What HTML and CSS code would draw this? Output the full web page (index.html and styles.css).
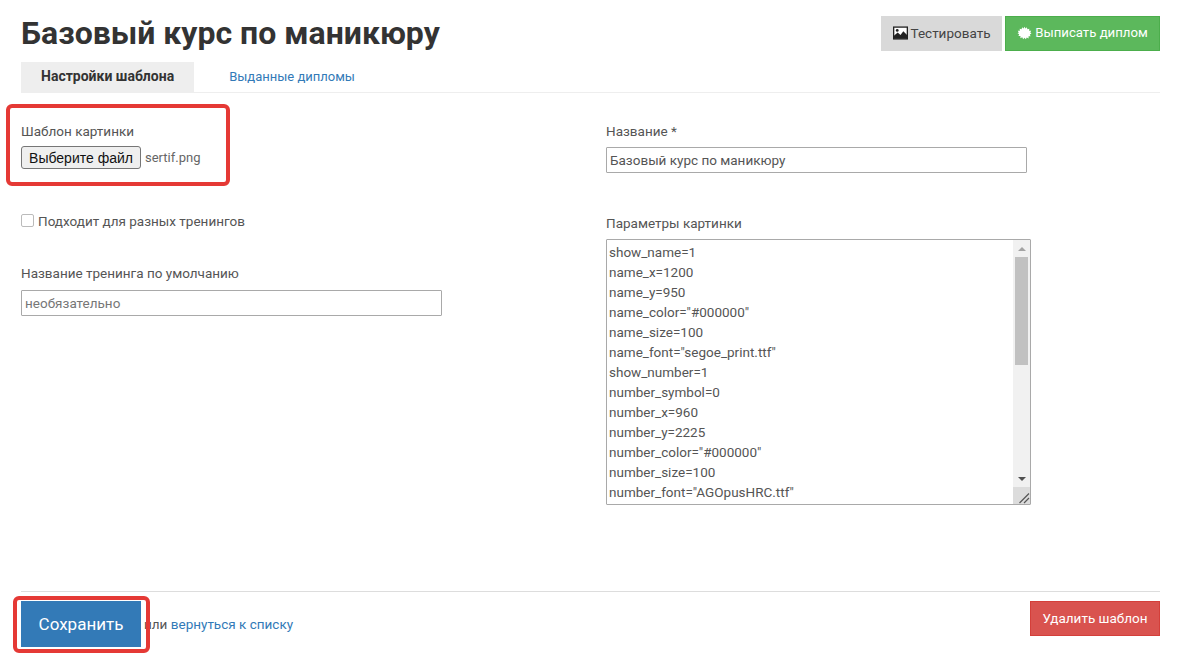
FILE: index.html
```html
<!DOCTYPE html>
<html lang="ru">
<head>
<meta charset="utf-8">
<title>Базовый курс по маникюру</title>
<link rel="stylesheet" href="styles.css">
</head>
<body>
<div class="page">
  <header class="head">
    <h1>Базовый курс по маникюру</h1>
    <div class="actions">
      <a class="btn btn-gray"><svg class="ico" viewBox="0 0 16 14"><rect x="0.7" y="0.7" width="14.6" height="12.6" fill="#fff" stroke="#222" stroke-width="1.4"/><path d="M1 13V10L5 6.500L8 9L11 5L15 9V13Z" fill="#222"/><circle cx="4.500" cy="4.200" r="1.500" fill="#222"/></svg>Тестировать</a>
      <a class="btn btn-green"><svg class="ico" viewBox="-1 -1 18 18"><path fill="#fff" d="M8 0l1.300 2.200L11.100.7l.6 2.600 2.500-.9-.3 2.700 2.700-.1-1.200 2.400L17 8.500l-2.200 1.300 1 2.400-2.600.1.100 2.700-2.400-1.100L9.700 16 8 14l-1.700 2-1.200-2.500-2.400 1.100.1-2.700-2.600-.1 1-2.400L-1 8.500l1.600-1.100-1.200-2.400 2.700.1-.3-2.700 2.500.9.600-2.600 1.800 1.500z"/></svg>Выписать диплом</a>
    </div>
  </header>
  <nav class="tabs">
    <a class="tab active">Настройки шаблона</a>
    <a class="tab">Выданные дипломы</a>
  </nav>
  <main class="cols">
    <section class="col col-left">
      <div class="field f-file">
        <label>Шаблон картинки</label>
        <div class="file"><button class="file-btn" type="button">Выберите файл</button><span class="file-name">sertif.png</span></div>
        <span class="mark mark-file"></span>
      </div>
      <div class="check"><span class="box"></span>Подходит для разных тренингов</div>
      <div class="field f-default">
        <label>Название тренинга по умолчанию</label>
        <input class="input" type="text" placeholder="необязательно">
      </div>
    </section>
    <section class="col col-right">
      <div class="field f-name">
        <label>Название *</label>
        <input class="input" type="text" value="Базовый курс по маникюру">
      </div>
      <div class="field f-params">
        <label>Параметры картинки</label>
        <div class="area-wrap">
        <textarea class="area" spellcheck="false">show_name=1
name_x=1200
name_y=950
name_color="#000000"
name_size=100
name_font="segoe_print.ttf"
show_number=1
number_symbol=0
number_x=960
number_y=2225
number_color="#000000"
number_size=100
number_font="AGOpusHRC.ttf"
show_date=1
date_x=1700
date_y=2225
date_color="#000000"
date_size=100
date_font="AGOpusHRC.ttf"</textarea>
        <div class="sbar">
          <span class="arrow arrow-up"></span>
          <div class="track"><div class="thumb"></div></div>
          <span class="arrow arrow-down"></span>
          <div class="corner"><svg class="grip" viewBox="0 0 12 12"><path d="M1.500 11L11 1.500M6 11L11 6" stroke="#555" stroke-width="1.200" fill="none"/></svg></div>
        </div>
        </div>
      </div>
    </section>
  </main>
  <footer class="foot">
    <div class="foot-left">
      <a class="btn-save">Сохранить</a>
      <span class="or">или <a class="link">вернуться к списку</a></span>
      <span class="mark mark-save"></span>
    </div>
    <a class="btn btn-red">Удалить шаблон</a>
  </footer>
</div>
</body>
</html>
```
FILE: styles.css
```css
html, body { margin: 0; padding: 0; background: #fff; }
body {
  font-family: Roboto, "Open Sans", sans-serif;
  font-size: 13.500px;
  color: #555;
  height: 671px;
  overflow: hidden;
}
.page { width: 1139px; margin-left: 21px; }
.head { display: flex; justify-content: space-between; align-items: flex-start; height: 62px; }
h1 { margin: 11px 0 0; font-size: 32px; line-height: 44px; font-weight: 700; color: #333; }
.actions { display: flex; gap: 3px; margin-top: 16px; }
.btn { display: flex; align-items: center; justify-content: center; height: 35px; padding-bottom: 2px; box-sizing: border-box; font-size: 13.500px; }
.btn-gray { width: 121px; background: #d9d9d9; color: #444; }
.btn-green { width: 155px; background: #5cb85c; color: #fff; border: 1px solid #4cae4c; font-size: 13.200px; }
.ico { width: 15px; height: 14px; margin-right: 3px; }
.tabs { display: flex; height: 30px; border-bottom: 1px solid #eee; }
.tab { display: block; padding: 0 20px; line-height: 29px; color: #337ab7; font-size: 13px; margin-right: 15px; }
.tab.active { background: #eee; color: #333; font-size: 14px; font-weight: 700; white-space: nowrap; }
.cols { display: flex; height: 498px; }
.col-left { width: 585px; }
.col-right { flex: 1; }
.field { position: relative; }
label { display: block; line-height: 20px; color: #555; }
.f-file { margin-top: 28px; }
.file { display: flex; align-items: center; margin-top: 5px; }
.file-btn {
  width: 120px; height: 23px; padding: 0; margin-right: 4px;
  font-family: "Liberation Sans", Arial, sans-serif; font-size: 14px; color: #111;
  background: #efefef; border: 1px solid #767676; border-radius: 3px;
}
.file-name { font-size: 13px; color: #666; }
.mark { position: absolute; border: 4px solid #e53935; border-radius: 6px; box-sizing: border-box; pointer-events: none; }
.mark-file { left: -15px; top: -17px; width: 224px; height: 82px; }
.check { display: flex; align-items: center; margin-top: 42px; height: 20px; }
.box { width: 11px; height: 11px; border: 1px solid #bbb; border-radius: 2px; margin-right: 4px; margin-top: -2px; background: #fff; }
.f-default { margin-top: 32px; }
.f-default .input { margin-top: 7px; }
.input {
  display: block; box-sizing: border-box; width: 421px; height: 26px; margin-top: 6px; padding: 0 3px;
  border: 1px solid #a9a9a9; border-radius: 1px; font: inherit; color: #555; outline: none;
}
.input::placeholder { color: #777; }
.f-name { margin-top: 28px; }
.f-params { margin-top: 40px; }
.area-wrap { position: relative; width: 425px; height: 266px; margin-top: 6px; }
.area {
  display: block; box-sizing: border-box; width: 100%; height: 100%; margin: 0; padding: 2px 2px 0;
  border: 1px solid #a9a9a9; border-radius: 1px; font: inherit; line-height: 20px; color: #555;
  overflow: hidden; resize: none; outline: none; white-space: pre; background: #fff;
}
.sbar { position: absolute; top: 1px; right: 1px; bottom: 1px; width: 17px; background: #f1f1f1; display: flex; flex-direction: column; align-items: center; }
.arrow { display: block; width: 0; height: 0; border-left: 4px solid transparent; border-right: 4px solid transparent; flex: none; }
.arrow-up { border-bottom: 4px solid #a3a3a3; margin: 7px 0 6px; }
.track { width: 100%; height: 214px; flex: none; }
.thumb { height: 108px; margin: 0 2px; background: #c1c1c1; }
.arrow-down { border-top: 4px solid #505050; margin: 6px 0 7px; }
.corner { width: 17px; height: 17px; background: #dcdcdc; display: flex; align-items: flex-end; justify-content: flex-end; flex: none; margin-top: -1px; }
.grip { width: 12px; height: 12px; display: block; }
.foot { display: flex; justify-content: space-between; align-items: flex-start; border-top: 1px solid #ddd; padding-top: 9px; }
.foot-left { position: relative; display: flex; align-items: center; }
.btn-save { display: block; width: 120px; height: 46px; line-height: 46px; text-align: center; background: #337ab7; color: #fff; font-size: 17px; }
.or { margin-left: 3px; }
.link { color: #337ab7; }
.mark-save { left: -8px; top: -5px; width: 137px; height: 57px; }
.btn-red { width: 130px; background: #d9534f; border: 1px solid #d43f3a; color: #fff; }
```
